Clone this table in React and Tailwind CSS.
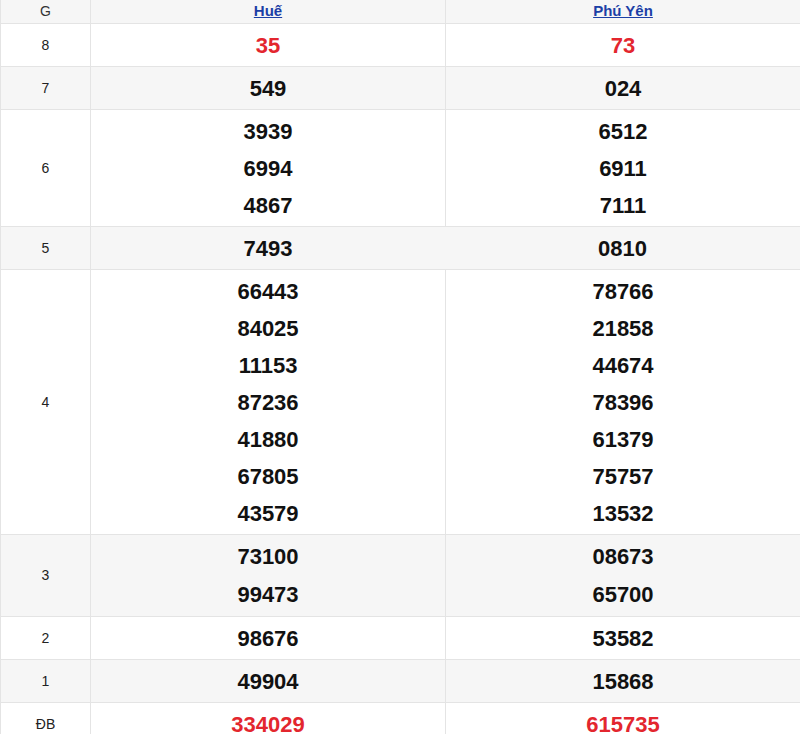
const rows = [
  { label: "8", hue: ["35"], py: ["73"], red: true },
  { label: "7", hue: ["549"], py: ["024"], gray: true },
  { label: "6", hue: ["3939", "6994", "4867"], py: ["6512", "6911", "7111"] },
  { label: "5", hue: ["7493"], py: ["0810"], gray: true, noMid: true },
  {
    label: "4",
    hue: ["66443", "84025", "11153", "87236", "41880", "67805", "43579"],
    py: ["78766", "21858", "44674", "78396", "61379", "75757", "13532"],
  },
  { label: "3", hue: ["73100", "99473"], py: ["08673", "65700"], gray: true, tall: true },
  { label: "2", hue: ["98676"], py: ["53582"] },
  { label: "1", hue: ["49904"], py: ["15868"], gray: true },
  { label: "ĐB", hue: ["334029"], py: ["615735"], red: true },
];

function NumCell({ nums, red, gray, noBorder, tall }) {
  return (
    <div
      className={`flex flex-col items-center justify-center pt-[3px] pb-[2px] border-b border-[#e4e4e4] ${noBorder ? "" : "border-l"} ${gray ? "bg-[#f6f6f6]" : "bg-white"}`}
    >
      {nums.map((n) => (
        <div
          key={n}
          className={`${tall ? "h-[38px] leading-[38px]" : "h-[37px] leading-[37px]"} text-[22px] font-bold ${red ? "text-[#e3262e]" : "text-[#111]"}`}
        >
          {n}
        </div>
      ))}
    </div>
  );
}

export default function App() {
  return (
    <div className="w-[800px] h-[734px] overflow-hidden bg-white" style={{ fontFamily: '"Liberation Sans", Arial, sans-serif' }}>
      <div className="grid grid-cols-[89px_1fr_1fr] border-l border-[#e4e4e4]">
        <div className="h-[24px] flex items-center justify-center bg-[#f6f6f6] border-b border-[#e4e4e4] text-[14px] text-[#333]">G</div>
        <div className="h-[24px] flex items-center justify-center bg-[#f6f6f6] border-b border-l border-[#e4e4e4]">
          <a href="#" className="text-[15px] font-bold text-[#1c3fa6] underline">Huế</a>
        </div>
        <div className="h-[24px] flex items-center justify-center bg-[#f6f6f6] border-b border-l border-[#e4e4e4]">
          <a href="#" className="text-[15px] font-bold text-[#1c3fa6] underline">Phú Yên</a>
        </div>
        {rows.map((r) => (
          <div key={r.label} className="contents">
            <div
              className={`flex items-center justify-center text-[14px] text-[#222] border-b border-[#e4e4e4] ${r.gray ? "bg-[#f6f6f6]" : "bg-white"}`}
            >
              {r.label}
            </div>
            <NumCell nums={r.hue} red={r.red} gray={r.gray} tall={r.tall} />
            <NumCell nums={r.py} red={r.red} gray={r.gray} tall={r.tall} noBorder={r.noMid} />
          </div>
        ))}
      </div>
    </div>
  );
}
